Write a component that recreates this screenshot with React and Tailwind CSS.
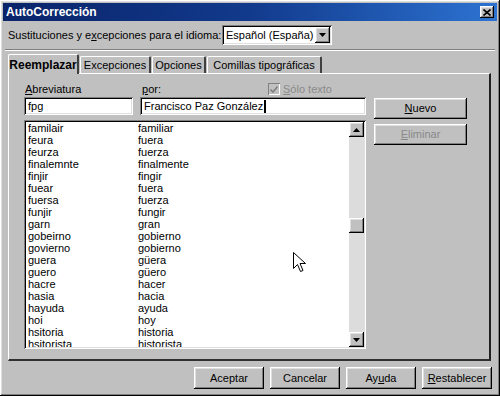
import { useState } from 'react'

const raised = 'shadow-[inset_-1px_-1px_#000,inset_1px_1px_#fff,inset_-2px_-2px_#808080,inset_2px_2px_#dfdfdf]'
const sunken = 'shadow-[inset_1px_1px_#808080,inset_-1px_-1px_#fff,inset_2px_2px_#000,inset_-2px_-2px_#dfdfdf]'

const entries = [
  ['familair', 'familiar'],
  ['feura', 'fuera'],
  ['feurza', 'fuerza'],
  ['finalemnte', 'finalmente'],
  ['finjir', 'fingir'],
  ['fuear', 'fuera'],
  ['fuersa', 'fuerza'],
  ['funjir', 'fungir'],
  ['garn', 'gran'],
  ['gobeirno', 'gobierno'],
  ['govierno', 'gobierno'],
  ['guera', 'güera'],
  ['guero', 'güero'],
  ['hacre', 'hacer'],
  ['hasia', 'hacia'],
  ['hayuda', 'ayuda'],
  ['hoi', 'hoy'],
  ['hsitoria', 'historia'],
  ['hsitorista', 'historista'],
]

function Btn({ children, className = '', disabled = false }) {
  return (
    <button
      className={`bg-[#c0c0c0] ${raised} text-[11px] ${disabled ? 'text-[#8a8a8a]' : 'text-black'} ${className}`}
    >
      {children}
    </button>
  )
}

function Arrow({ down = false }) {
  return (
    <div className={`w-[15px] h-[15px] bg-[#c0c0c0] ${raised} flex items-center justify-center`}>
      <svg width="7" height="4" viewBox="0 0 7 4">
        {down ? <path d="M0 0h7L3.5 4z" fill="#000" /> : <path d="M0 4h7L3.5 0z" fill="#000" />}
      </svg>
    </div>
  )
}

export default function App() {
  const [tab, setTab] = useState('reemplazar')

  const tabs = [
    { id: 'reemplazar', label: 'Reemplazar', w: 'w-[71px]' },
    { id: 'excepciones', label: 'Excepciones', w: 'w-[71px]' },
    { id: 'opciones', label: 'Opciones', w: 'w-[54px]' },
    { id: 'comillas', label: 'Comillas tipográficas', w: 'w-[115px]' },
  ]

  return (
    <div
      className={`relative w-[500px] h-[396px] bg-[#c0c0c0] p-[3px] ${raised} text-[11px] text-black leading-none`}
      style={{ fontFamily: '"Liberation Sans", Arial, sans-serif' }}
    >
      {/* Title bar */}
      <div className="h-[18px] flex items-center justify-between pl-[3px] pr-[3px] bg-gradient-to-r from-[#0a246a] via-[#123a8c] to-[#2d73d2]">
        <span className="text-white font-bold text-[12px]">AutoCorrección</span>
        <div className={`w-[14px] h-[12px] bg-[#c0c0c0] ${raised} flex items-center justify-center`}>
          <svg width="8" height="7" viewBox="0 0 8 7">
            <path d="M0.5 0.5l7 6M7.5 0.5l-7 6" stroke="#000" strokeWidth="1.6" />
          </svg>
        </div>
      </div>

      {/* Language row */}
      <div className="flex items-center h-[20px] mt-[4px] pl-[5px]">
        <span className="w-[214px]">
          Sustituciones y e<span className="underline">x</span>cepciones para el idioma:
        </span>
        <div className={`w-[110px] h-[20px] bg-white ${sunken} flex items-center justify-between pl-[4px] pr-[2px]`}>
          <span>Español (España)</span>
          <div className={`w-[15px] h-[16px] bg-[#c0c0c0] ${raised} flex items-center justify-center`}>
            <svg width="7" height="4" viewBox="0 0 7 4">
              <path d="M0 0h7L3.5 4z" fill="#000" />
            </svg>
          </div>
        </div>
      </div>

      {/* Separator */}
      <div className="mt-[4px] mx-[2px] border-t border-[#808080] border-b border-b-white" />

      {/* Tabs */}
      <div className="flex items-end h-[20px] mt-[2px] pl-[5px]">
        {tabs.map((t) => {
          const active = tab === t.id
          return (
            <button
              key={t.id}
              onClick={() => setTab(t.id)}
              className={`${t.w} ${active ? 'h-[20px] font-bold text-[12px] z-10 -mb-[1px] bg-[#c0c0c0]' : 'h-[17px] text-[11px]'} border-l border-t border-white border-r-2 border-r-[#404040] rounded-t-[2px] flex items-center justify-center mr-[1px]`}
            >
              {t.label}
            </button>
          )
        })}
      </div>

      {/* Tab panel */}
      <div className="ml-[5px] w-[483px] h-[288px] border-l border-t border-white border-r-2 border-r-[#202020] border-b-2 border-b-[#303030] flex pl-[15px] pt-[8px]">
        <div className="w-[342px] flex flex-col">
          <div className="flex h-[14px] items-center">
            <span className="w-[118px] pl-[1px]">
              <span className="underline">A</span>breviatura
            </span>
            <span className="w-[126px]">
              <span className="underline">p</span>or:
            </span>
            <span className="flex items-center gap-[3px] text-[#8a8a8a]">
              <span className="w-[12px] h-[12px] bg-[#c0c0c0] shadow-[inset_1px_1px_#808080,inset_-1px_-1px_#fff] flex items-center justify-center">
                <svg width="8" height="7" viewBox="0 0 8 7">
                  <path d="M0.5 3.5l2.5 2.5 4.5-5.5" stroke="#808080" strokeWidth="1.6" fill="none" />
                </svg>
              </span>
              <span>
                <span className="underline">S</span>ólo texto
              </span>
            </span>
          </div>
          <div className="flex gap-[7px] mt-[1px]">
            <div className={`w-[109px] h-[18px] bg-white ${sunken} flex items-center pl-[4px]`}>fpg</div>
            <div className={`w-[226px] h-[18px] bg-white ${sunken} flex items-center pl-[4px]`}>
              Francisco Paz González<span className="w-[2px] h-[13px] bg-black ml-[1px]" />
            </div>
          </div>
          <div className={`mt-[5px] h-[229px] bg-white ${sunken} p-[2px] flex`}>
            <div className="flex-1 overflow-hidden">
              {entries.map(([a, b]) => (
                <div key={a} className="flex h-[12px] items-center">
                  <span className="w-[112px] pl-[2px]">{a}</span>
                  <span>{b}</span>
                </div>
              ))}
            </div>
            <div className="w-[15px] flex flex-col bg-[#dcdcdc]">
              <Arrow />
              <div className="flex-1 pt-[81px]">
                <div className={`w-[15px] h-[15px] bg-[#c0c0c0] ${raised}`} />
              </div>
              <Arrow down />
            </div>
          </div>
        </div>

        <div className="ml-[8px] mt-[16px] flex flex-col gap-[5px]">
          <Btn className="w-[93px] h-[21px]">
            <span className="underline">N</span>uevo
          </Btn>
          <Btn className="w-[93px] h-[21px]" disabled>
            <span className="underline">E</span>liminar
          </Btn>
        </div>
      </div>

      {/* Bottom buttons */}
      <div className="flex justify-end gap-[6px] mt-[6px] pr-[5px]">
        <Btn className="w-[70px] h-[22px]">Aceptar</Btn>
        <Btn className="w-[70px] h-[22px]">Cancelar</Btn>
        <Btn className="w-[70px] h-[22px]">
          Ay<span className="underline">u</span>da
        </Btn>
        <Btn className="w-[70px] h-[22px]">
          <span className="underline">R</span>establecer
        </Btn>
      </div>

      {/* Mouse pointer */}
      <svg className="absolute left-[293px] top-[252px]" width="13" height="21" viewBox="0 0 13 21">
        <path d="M0.5 0.5v16l4-4 3 7 2.5-1-3-7h5.5z" fill="#fff" stroke="#000" strokeWidth="1" />
      </svg>
    </div>
  )
}
